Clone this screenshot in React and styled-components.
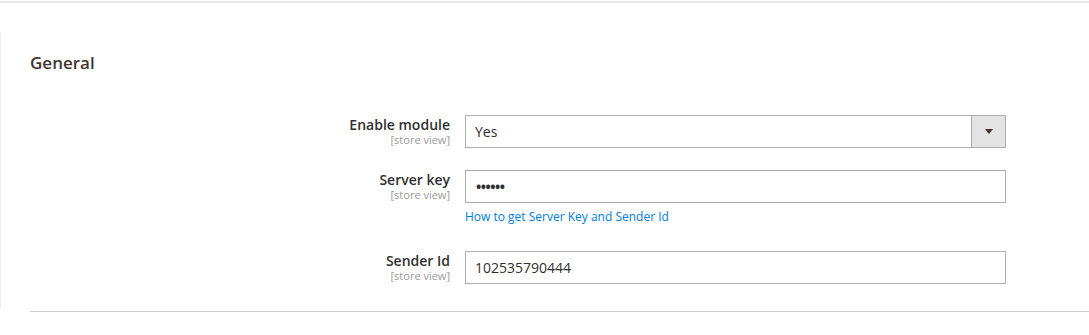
import React from 'react';
import styled, { createGlobalStyle } from 'styled-components';

const GlobalStyle = createGlobalStyle`
  body {
    margin: 0;
    background: #ffffff;
    font-family: 'Open Sans', 'Liberation Sans', sans-serif;
    color: #303030;
  }
`;

const Page = styled.div`
  width: 1089px;
  height: 335px;
  overflow: hidden;
`;

const TopRule = styled.div`
  margin-top: 1px;
  border-top: 2px solid #e6e6e6;
`;

const Section = styled.div`
  margin-top: 29px;
  border-left: 1px solid #eeeeee;
  padding: 20px 0 24px 29px;
`;

const Title = styled.div`
  font-size: 17px;
  font-weight: 600;
  color: #41362f;
  line-height: 22px;
  margin-bottom: 41px;
`;

const Row = styled.div`
  display: flex;
  align-items: flex-start;
  margin-bottom: ${(p) => p.$gap}px;
`;

const LabelCol = styled.div`
  width: 435px;
  padding-right: 15px;
  padding-top: 1px;
  text-align: right;
  box-sizing: border-box;
`;

const LabelText = styled.div`
  font-size: 14px;
  font-weight: 600;
  line-height: 18px;
  color: #303030;
`;

const Scope = styled.div`
  font-size: 11px;
  line-height: 12px;
  color: #999999;
`;

const Control = styled.div`
  width: 541px;
`;

const Box = styled.div`
  height: 33px;
  box-sizing: border-box;
  border: 1px solid #adadad;
  display: flex;
  align-items: center;
  background: #ffffff;
  font-size: 14px;
  color: #303030;
`;

const Value = styled.div`
  flex: 1;
  padding-left: ${(p) => (p.$dots ? 10 : 9)}px;
  letter-spacing: ${(p) => (p.$dots ? '-0.5px' : '0')};
  font-weight: ${(p) => (p.$dots ? 700 : 400)};
`;

const ArrowButton = styled.div`
  width: 33px;
  height: 100%;
  background: #e3e3e3;
  border-left: 1px solid #adadad;
  display: flex;
  align-items: center;
  justify-content: center;
`;

const Caret = styled.div`
  width: 0;
  height: 0;
  border-left: 4px solid transparent;
  border-right: 4px solid transparent;
  border-top: 5px solid #41362f;
`;

const Note = styled.a`
  display: block;
  margin-top: 6px;
  font-size: 12px;
  line-height: 16px;
  color: #007bdb;
  text-decoration: none;
`;

const BottomRule = styled.div`
  margin-left: 30px;
  margin-top: 3px;
  border-top: 1px solid #cccccc;
`;

const Field = ({ label, children, note, gap }) => (
  <Row $gap={gap}>
    <LabelCol>
      <LabelText>{label}</LabelText>
      <Scope>[store view]</Scope>
    </LabelCol>
    <Control>
      {children}
      {note && <Note href="#">{note}</Note>}
    </Control>
  </Row>
);

const App = () => (
  <Page>
    <GlobalStyle />
    <TopRule />
    <Section>
      <Title>General</Title>
      <Field label="Enable module" gap={22}>
        <Box>
          <Value>Yes</Value>
          <ArrowButton>
            <Caret />
          </ArrowButton>
        </Box>
      </Field>
      <Field label="Server key" note="How to get Server Key and Sender Id" gap={26}>
        <Box>
          <Value $dots>••••••</Value>
        </Box>
      </Field>
      <Field label="Sender Id" gap={0}>
        <Box>
          <Value>102535790444</Value>
        </Box>
      </Field>
    </Section>
    <BottomRule />
  </Page>
);

export default App;
